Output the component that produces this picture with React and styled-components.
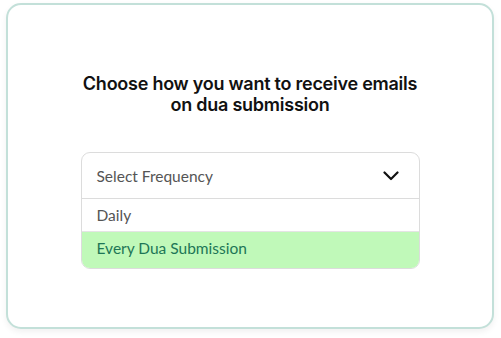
import React from 'react';
import styled, { createGlobalStyle } from 'styled-components';

const GlobalStyle = createGlobalStyle`
  html, body {
    margin: 0;
    padding: 0;
    background: #ffffff;
  }
`;

const Page = styled.div`
  padding: 3px 7px 10px 6px;
`;

const Card = styled.div`
  box-sizing: border-box;
  height: 326px;
  border: 2px solid #c3e0d9;
  border-radius: 15px;
  box-shadow: 0 3px 6px rgba(0, 0, 0, 0.06);
  background: #ffffff;
  display: flex;
  flex-direction: column;
  align-items: center;
  padding-top: 68px;
`;

const Title = styled.h2`
  margin: 0;
  font-family: Inter, "Liberation Sans", sans-serif;
  font-weight: 600;
  font-size: 18px;
  line-height: 21px;
  letter-spacing: -0.25px;
  color: #111111;
  text-align: center;
`;

const Dropdown = styled.div`
  margin-top: 37px;
  width: 339px;
  box-sizing: border-box;
  border: 1px solid #dcdcdc;
  border-radius: 9px;
  overflow: hidden;
  background: #ffffff;
  font-family: Lato, "Open Sans", sans-serif;
`;

const Trigger = styled.div`
  height: 45px;
  display: flex;
  align-items: center;
  justify-content: space-between;
  padding: 0 20px 0 15px;
  border-bottom: 1px solid #dcdcdc;
  font-size: 15.5px;
  color: #555555;
`;

const Option = styled.div`
  height: ${(p) => (p.$active ? '37px' : '32px')};
  display: flex;
  align-items: center;
  padding-left: 15px;
  padding-bottom: ${(p) => (p.$active ? '4px' : '0')};
  box-sizing: border-box;
  font-size: 15.5px;
  color: ${(p) => (p.$active ? '#1d7656' : '#555555')};
  background: ${(p) => (p.$active ? '#c0f9b9' : '#ffffff')};
  border-top: ${(p) => (p.$active ? '1px solid #e4e4e4' : 'none')};
`;

const Chevron = () => (
  <svg width="16" height="10" viewBox="0 0 16 10" fill="none">
    <path d="M1.5 1.5L8 8L14.5 1.5" stroke="#111" strokeWidth="2.2" strokeLinecap="round" strokeLinejoin="round" />
  </svg>
);

export default function App() {
  return (
    <Page>
      <GlobalStyle />
      <Card>
        <Title>
          Choose how you want to receive emails
          <br />
          on dua submission
        </Title>
        <Dropdown>
          <Trigger>
            <span>Select Frequency</span>
            <Chevron />
          </Trigger>
          <Option>Daily</Option>
          <Option $active>Every Dua Submission</Option>
        </Dropdown>
      </Card>
    </Page>
  );
}
